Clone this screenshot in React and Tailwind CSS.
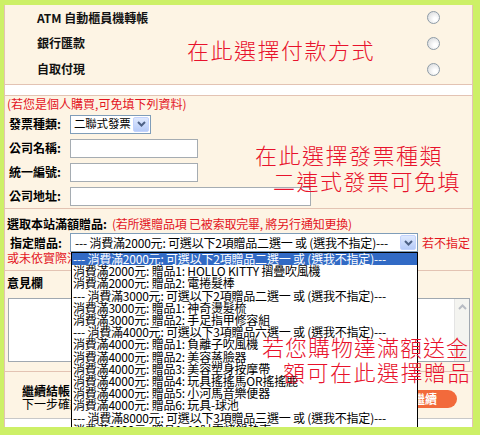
import React from "react";

const FONT = "font-['Noto_Sans_CJK_TC','Noto_Sans_CJK_SC',sans-serif]";

function Radio() {
  return (
    <div className="w-[13px] h-[13px] rounded-full border border-[#8e9ba6] bg-[radial-gradient(circle_at_65%_65%,#ffffff_15%,#d2d4d6_100%)]" />
  );
}

function Chevron() {
  return (
    <svg width="9" height="6" viewBox="0 0 9 6">
      <path d="M1 1 L4.5 4.5 L8 1" fill="none" stroke="#4d6185" strokeWidth="2" />
    </svg>
  );
}

function SelectArrow() {
  return (
    <div className="w-[16px] h-full shrink-0 flex items-center justify-center bg-gradient-to-b from-[#dfe9fe] to-[#b6cbf8] border border-[#c3d3fd] rounded-[2px]">
      <Chevron />
    </div>
  );
}

function Input({ w }) {
  return <div className={`${w} h-[19px] bg-white border border-[#a5acb2]`} />;
}

const items = [
  "--- 消費滿2000元: 可選以下2項贈品二選一 或 (選我不指定)---",
  "消費滿2000元: 贈品1: HOLLO KITTY 摺疊吹風機",
  "消費滿2000元: 贈品2: 電捲髮棒",
  "--- 消費滿3000元: 可選以下2項贈品二選一 或 (選我不指定)---",
  "消費滿3000元: 贈品1: 神奇燙髮梳",
  "消費滿3000元: 贈品2: 手足指甲修容組",
  "--- 消費滿4000元: 可選以下3項贈品六選一 或 (選我不指定)---",
  "消費滿4000元: 贈品1: 負離子吹風機",
  "消費滿4000元: 贈品2: 美容蒸臉器",
  "消費滿4000元: 贈品3: 美容塑身按摩帶",
  "消費滿4000元: 贈品4: 玩具搖搖馬OR搖搖鹿",
  "消費滿4000元: 贈品5: 小河馬音樂便器",
  "消費滿4000元: 贈品6: 玩具-球池",
  "--- 消費滿8000元: 可選以下3項贈品三選一 或 (選我不指定)---",
  "消費滿8000元: 贈品1: 10吋電烤鍋熱壺",
  "消費滿8000元: 贈品2: 多功能果汁機",
];

const ANN = "absolute z-20 whitespace-nowrap text-[22px] leading-[22px] tracking-[1.5px] font-light text-[#e8122c]";

export default function App() {
  const payments = ["ATM 自動櫃員機轉帳", "銀行匯款", "自取付現"];
  const rows = [
    ["公司名稱:", "w-[128px]"],
    ["統一編號:", "w-[128px]"],
    ["公司地址:", "w-[241px]"],
  ];
  return (
    <div className={`w-[480px] h-[435px] bg-[#cdf067] pt-[5px] pl-[4px] pr-[7px] pb-[8px] overflow-hidden ${FONT}`}>
      <div className="relative h-full flex flex-col bg-[#fdf4e4] border-x border-[#e3c3b3] overflow-hidden text-[12px] leading-none text-black">
        {/* payment */}
        <div className="h-[80px] shrink-0 border-b border-[#e3c3b3] flex flex-col">
          {payments.map((p, i) => (
            <div
              key={p}
              className={`${i === 0 ? "h-[25px]" : "h-[26px]"} flex items-center justify-between pl-[32px] pr-[32px] font-bold text-[#111]`}
            >
              <span>{p}</span>
              <Radio />
            </div>
          ))}
        </div>
        <div className="h-[11px] shrink-0 bg-white border-b border-[#e3c3b3]" />

        {/* invoice */}
        <div className="h-[113px] shrink-0 border-b border-[#e3c3b3] flex flex-col">
          <div className="h-[16px] flex items-center pl-[2px] text-[#e3141e]">(若您是個人購買,可免填下列資料)</div>
          <div className="h-[24px] flex items-center">
            <div className="w-[65px] pl-[4px] font-bold">發票種類:</div>
            <div className="w-[81px] h-[19px] bg-white border border-[#7f9db9] flex items-center justify-between pl-[3px] pr-[1px] py-[1px]">
              <span className="whitespace-nowrap text-[11.5px] tracking-[-0.2px]">二聯式發票</span>
              <SelectArrow />
            </div>
          </div>
          {rows.map(([l, w]) => (
            <div key={l} className="h-[24px] flex items-center">
              <div className="w-[65px] pl-[4px] font-bold">{l}</div>
              <Input w={w} />
            </div>
          ))}
        </div>

        {/* gift */}
        <div className="h-[62px] shrink-0 border-b border-[#e3c3b3] flex flex-col pt-[6px]">
          <div className="h-[18px] flex items-center pl-[2px]">
            <span className="font-bold">選取本站滿額贈品:</span>
            <span className="ml-[5px] text-[#e3141e] tracking-[-0.2px]">(若所選贈品項 已被索取完畢, 將另行通知更換)</span>
          </div>
          <div className="h-[19px] flex items-center">
            <div className="w-[65px] pl-[5px] font-bold">指定贈品:</div>
            <div className="relative w-[348px] h-[19px]">
              <div className="w-full h-full bg-white border border-[#7f9db9] flex items-center justify-between pl-[4px] pr-[1px] py-[1px]">
                <span className="whitespace-nowrap tracking-[-0.2px]">--- 消費滿2000元: 可選以下2項贈品二選一 或 (選我不指定)---</span>
                <SelectArrow />
              </div>
              <div className="absolute z-10 top-full left-[1px] w-[347px] h-[200px] bg-white border border-black tracking-[-0.2px]">
                {items.map((t, i) => (
                  <div
                    key={i}
                    className={`h-[12.2px] flex items-center pl-[1px] whitespace-nowrap ${i === 0 ? "bg-[#316ac5] text-white" : "text-black"}`}
                  >
                    {t}
                  </div>
                ))}
              </div>
            </div>
            <span className="ml-[4px] text-[#e3141e] whitespace-nowrap">若不指定</span>
          </div>
          <div className="h-[12px] flex items-center pl-[2px] text-[#e3141e]">或未依實際消費金額選擇贈品者, 恕不另行寄送</div>
        </div>

        {/* comments */}
        <div className="h-[101px] shrink-0 border-b border-[#e3c3b3] flex flex-col">
          <div className="h-[24px] flex items-center pl-[2px] font-bold">意見欄</div>
          <div className="ml-[3px] mr-[2px] mt-[3px] h-[64px] bg-white border border-[#a0a8b0] flex justify-end">
            <div className="w-[15px] h-full bg-[#f4f4f0] border-l border-[#e4e4e4] flex flex-col">
              <div className="h-[15px] flex items-center justify-center">
                <svg width="9" height="6" viewBox="0 0 9 6">
                  <path d="M1 5 L4.5 1.5 L8 5" fill="none" stroke="#b8bcc4" strokeWidth="2" />
                </svg>
              </div>
            </div>
          </div>
        </div>

        {/* checkout */}
        <div className="h-[47px] shrink-0 border-b border-[#c8c8c8] flex justify-between pr-[15px]">
          <div className="pl-[17px] pt-[12px] flex flex-col">
            <div className="h-[13px] flex items-center font-bold">繼續結帳</div>
            <div className="h-[13px] flex items-center">下一步確認訂單資料</div>
          </div>
          <div className="mt-[18px] w-[64px] h-[18px] rounded-full bg-[#f26a3b] text-white font-bold flex items-center justify-center">
            繼續
          </div>
        </div>
        <div className="flex-1 bg-white" />

        {/* annotations */}
        <div className={`${ANN} left-[182px] top-[33px]`}>在此選擇付款方式</div>
        <div className={`${ANN} left-[250px] top-[138px]`}>在此選擇發票種類</div>
        <div className={`${ANN} left-[268px] top-[164px]`}>二連式發票可免填</div>
        <div className={`${ANN} left-[257px] top-[330px] tracking-[1px]`}>若您購物達滿額送金</div>
        <div className={`${ANN} left-[278px] top-[355px]`}>額可在此選擇贈品</div>
      </div>
    </div>
  );
}
